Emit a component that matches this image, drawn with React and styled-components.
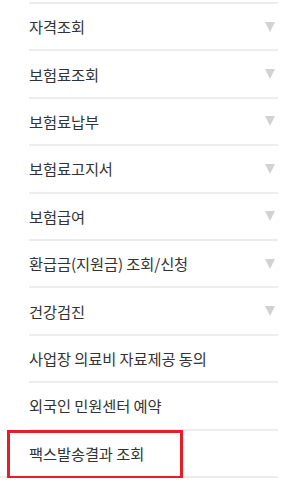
import React from 'react';
import styled, { createGlobalStyle } from 'styled-components';

const items = [
    { label: '자격조회', arrow: true },
    { label: '보험료조회', arrow: true },
    { label: '보험료납부', arrow: true },
    { label: '보험료고지서', arrow: true },
    { label: '보험급여', arrow: true },
    { label: '환급금(지원금) 조회/신청', arrow: true },
    { label: '건강검진', arrow: true },
    { label: '사업장 의료비 자료제공 동의' },
    { label: '외국인 민원센터 예약' },
    { label: '팩스발송결과 조회', marked: true },
];

const App = () => {
    return (
        <>
            <GlobalStyle />
            <MenuStyle>
                {items.map((item) => (
                    <RowStyle key={item.label}>
                        <span>{item.label}</span>
                        {item.arrow && <ArrowStyle />}
                        {item.marked && <MarkStyle />}
                    </RowStyle>
                ))}
            </MenuStyle>
        </>
    );
};

//Styled Components
const GlobalStyle = createGlobalStyle`
    body {
        margin: 0;
        background: #fff;
        font-family: "Malgun Gothic", "Noto Sans CJK KR", "Noto Sans", sans-serif;
    }
`;

const MenuStyle = styled.ul`
    list-style: none;
    margin: 0;
    padding: 2px 0 0 29px;
    width: 249px;
    border-bottom: 2px solid #ededed;
`;

const RowStyle = styled.li`
    position: relative;
    height: 45.4px;
    border-top: 2px solid #ededed;
    display: flex;
    align-items: center;
    justify-content: space-between;
    padding-right: 3px;
    font-size: 15.3px;
    color: #333;
    letter-spacing: -0.1px;
    span {
        margin-top: -1px;
    }
`;

const ArrowStyle = styled.i`
    width: 0;
    height: 0;
    border-left: 5.5px solid transparent;
    border-right: 5.5px solid transparent;
    border-top: 10px solid #d2d2d2;
`;

const MarkStyle = styled.div`
    position: absolute;
    left: -22px;
    top: -1px;
    width: 170px;
    height: 43px;
    border: 3px solid #e61e28;
`;

export default App;
